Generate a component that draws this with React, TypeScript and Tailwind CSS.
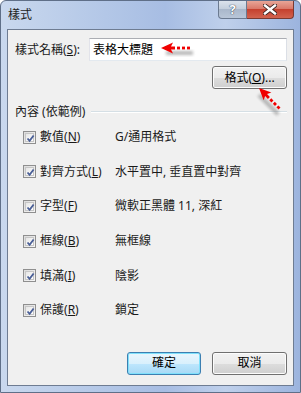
const font = "font-['Noto_Sans','Noto_Sans_CJK_TC',sans-serif]";

type Row = { name: string; key: string; value: string };

const rows: Row[] = [
  { name: "數值", key: "N", value: "G/通用格式" },
  { name: "對齊方式", key: "L", value: "水平置中, 垂直置中對齊" },
  { name: "字型", key: "F", value: "微軟正黑體 11, 深紅" },
  { name: "框線", key: "B", value: "無框線" },
  { name: "填滿", key: "I", value: "陰影" },
  { name: "保護", key: "R", value: "鎖定" },
];

function CheckBox() {
  return (
    <div className="w-[13px] h-[13px] border border-[#8f8f8f] bg-[linear-gradient(135deg,#dcdcdc,#f7f7f7)] p-[1px] shrink-0">
      <div className="w-full h-full border border-[#c6c6c6] bg-[linear-gradient(135deg,#e6e6e6,#ffffff)] relative">
        <svg width="9" height="9" viewBox="0 0 9 9" className="absolute left-0 top-0">
          <path d="M1.5 4.5 L3.6 6.8 L7.6 1.5" fill="none" stroke="#4a5f97" strokeWidth="1.8" />
        </svg>
      </div>
    </div>
  );
}

function Arrow({ className }: { className: string }) {
  return (
    <svg width="40" height="20" viewBox="-2 -10 40 20" className={className}>
      <defs>
        <filter id="blur" x="-50%" y="-50%" width="200%" height="200%">
          <feGaussianBlur stdDeviation="1.6" />
        </filter>
      </defs>
      <rect x="5" y="3" width="27" height="4" fill="#808080" opacity="0.55" filter="url(#blur)" />
      <path d="M0 0 L12 -5.5 L10 -1.4 L14 -1.4 L14 1.4 L10 1.4 L12 5.5 Z" fill="#f00000" />
      <rect x="16" y="-1.4" width="3" height="2.8" fill="#f00000" />
      <rect x="21" y="-1.4" width="3" height="2.8" fill="#f00000" />
      <rect x="26" y="-1.4" width="3" height="2.8" fill="#f00000" />
    </svg>
  );
}

export default function App() {
  return (
    <div className={`${font} w-[301px] h-[393px] flex flex-col rounded-t-[6px] border border-[#5f6f88] bg-[linear-gradient(90deg,#c9d8ee_0%,#b3c7e7_35%,#a7bde3_55%,#bfd0eb_75%,#9cb4de_100%)] relative overflow-hidden`}>
      {/* Title bar */}
      <div className="h-[28px] flex items-start shrink-0">
        <span className="pl-[7px] pt-[6px] text-[12px] leading-[16px] text-[#1e1e1e]">樣式</span>
        <div className="ml-auto mr-[6px] flex">
          <div className="w-[29px] h-[18px] rounded-bl-[4px] border border-t-0 border-[#6b7a90] bg-[linear-gradient(180deg,#dbe2ec_0%,#c4cfdd_45%,#aab8cb_50%,#b9c6d8_100%)] flex items-center justify-center">
            <span className="text-white font-bold text-[13px] leading-none [text-shadow:0_0_1px_#2d3a4d,0_0_1px_#2d3a4d]">?</span>
          </div>
          <div className="w-[47px] h-[18px] rounded-br-[4px] border border-l-0 border-t-0 border-[#7a3a32] bg-[linear-gradient(180deg,#e8a597_0%,#d9796a_45%,#c5412f_50%,#d2634f_100%)] flex items-center justify-center">
            <svg width="14" height="11" viewBox="0 0 14 11">
              <path d="M2 1.5 L12 9.5 M12 1.5 L2 9.5" stroke="#3b2320" strokeWidth="4.2" strokeLinecap="square" />
              <path d="M2 1.5 L12 9.5 M12 1.5 L2 9.5" stroke="#ffffff" strokeWidth="2.4" strokeLinecap="square" />
            </svg>
          </div>
        </div>
      </div>

      {/* Client panel */}
      <div className="ml-[6px] mr-[6px] mb-[6px] h-[357px] border border-[#6e7c92] bg-[#f0f0f0] flex flex-col pl-[7px] pr-[6px] pt-[8px] text-[12px] text-[#1a1a1a]">
        <div className="flex items-center h-[23px]">
          <span className="w-[74px] leading-[16px]">
            樣式名稱(<span className="underline">S</span>):
          </span>
          <div className="flex-1 h-[23px] border border-[#abadb3] border-l-[#e2e3ea] border-r-[#dbdfe6] border-b-[#e3e9ef] bg-white flex items-center pl-[3px]">
            <span className="leading-[16px] text-black">表格大標題</span>
          </div>
        </div>

        <button className="self-end mt-[5px] w-[75px] h-[23px] rounded-[3px] border border-[#707070] bg-[linear-gradient(180deg,#f2f2f2_0%,#ebebeb_50%,#dddddd_51%,#cfcfcf_100%)] shadow-[inset_0_0_0_1px_#fcfcfc] text-[12px] leading-[16px] text-black">
          格式(<span className="underline">O</span>)...
        </button>

        <div className="mt-[15px] h-[16px] flex items-center">
          <span className="leading-[16px]">內容 (依範例)</span>
          <div className="flex-1 ml-[6px] h-[2px] border-t border-[#d5dfe5] border-b border-b-white" />
        </div>

        <div className="flex flex-col pl-[8px]">
          {rows.map((r) => (
            <div key={r.key} className="h-[34.6px] flex items-center">
              <CheckBox />
              <span className="ml-[4px] w-[75px] leading-[16px]">
                {r.name}(<span className="underline">{r.key}</span>)
              </span>
              <span className="leading-[16px]">{r.value}</span>
            </div>
          ))}
        </div>

        <div className="mt-[24px] flex justify-end gap-[11px]">
          <button className="w-[74px] h-[23px] rounded-[3px] border border-[#3c7fb1] bg-[linear-gradient(180deg,#eaf6fd_0%,#d9f0fc_50%,#bee6fd_51%,#a7d9f5_100%)] shadow-[inset_0_0_0_1px_#7fe0fb] text-[12px] leading-[16px] text-black">
            確定
          </button>
          <button className="w-[75px] h-[23px] rounded-[3px] border border-[#707070] bg-[linear-gradient(180deg,#f2f2f2_0%,#ebebeb_50%,#dddddd_51%,#cfcfcf_100%)] shadow-[inset_0_0_0_1px_#fcfcfc] text-[12px] leading-[16px] text-black">
            取消
          </button>
        </div>
      </div>

      {/* annotation arrows */}
      <Arrow className="absolute left-[158px] top-[37px]" />
      <Arrow className="absolute left-[256px] top-[77px] rotate-45 origin-[2px_10px]" />
    </div>
  );
}
